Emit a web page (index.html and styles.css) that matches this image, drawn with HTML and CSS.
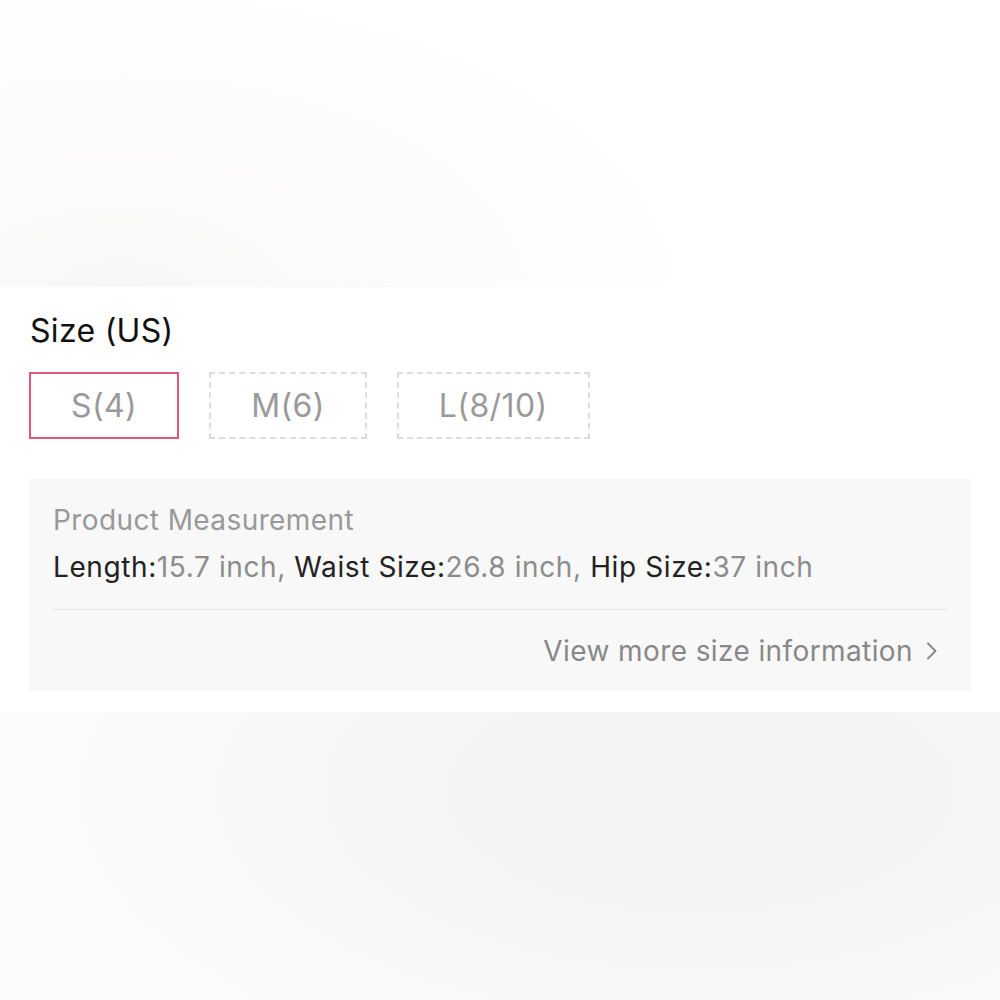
FILE: index.html
```html
<!DOCTYPE html>
<html>
<head>
<meta charset="utf-8">
<link rel="stylesheet" href="styles.css">
</head>
<body>
<div class="top-blur"></div>
<section class="panel">
  <h2 class="title">Size (US)</h2>
  <div class="sizes">
    <div class="size selected">S(4)</div>
    <div class="size">M(6)</div>
    <div class="size">L(8/10)</div>
  </div>
  <div class="measure">
    <div class="m-title">Product Measurement</div>
    <div class="m-values"><span class="k">Length:</span>15.7 inch, <span class="k">Waist Size:</span>26.8 inch, <span class="k">Hip Size:</span>37 inch</div>
    <div class="m-divider"></div>
    <div class="m-more">View more size information
      <svg class="chev" width="14" height="22" viewBox="0 0 14 22"><path d="M3 3.5 L10.5 11 L3 18.5" fill="none" stroke="#8a8a8a" stroke-width="2" stroke-linecap="round" stroke-linejoin="round"/></svg>
    </div>
  </div>
</section>
<div class="bottom-blur"></div>
</body>
</html>
```
FILE: styles.css
```css
* { box-sizing: border-box; }
html, body { margin: 0; padding: 0; }
body {
  width: 1000px;
  height: 1000px;
  overflow: hidden;
  font-family: Inter, Roboto, "Liberation Sans", sans-serif;
  background: #fff;
  display: flex;
  flex-direction: column;
}
.top-blur {
  height: 287px;
  flex: none;
  background:
    radial-gradient(ellipse 600px 330px at 120px 300px, rgba(249,245,245,0.9), rgba(251,249,249,0.6) 50%, rgba(255,255,255,0) 100%),
    #fff;
}
.panel {
  height: 425px;
  flex: none;
  background: #fff;
  padding: 26px 29px 0 29px;
}
.title {
  margin: 0;
  font-size: 32px;
  font-weight: 400;
  color: #111;
  line-height: 36px;
  letter-spacing: 0.3px;
  padding-left: 1px;
}
.sizes {
  display: flex;
  gap: 30px;
  margin-top: 23px;
}
.size {
  height: 67px;
  display: flex;
  align-items: center;
  justify-content: center;
  font-size: 32px;
  letter-spacing: 0.4px;
  color: #9a9a9a;
  border: 2px dashed #dcdcdc;
  padding: 0 40px;
}
.size.selected {
  border: 2px solid #df5680;
}
.measure {
  margin-top: 40px;
  background: #f8f8f8;
  height: 212px;
  padding: 24px 24px 0 24px;
}
.m-title {
  font-size: 28px;
  color: #999;
  line-height: 34px;
  letter-spacing: 0.4px;
}
.m-values {
  margin-top: 13px;
  font-size: 28px;
  color: #8c8c8c;
  line-height: 34px;
  letter-spacing: 0.6px;
}
.m-values .k { color: #222; }
.m-divider {
  margin-top: 25px;
  height: 1px;
  background: #e3e3e3;
}
.m-more {
  display: flex;
  justify-content: flex-end;
  align-items: center;
  gap: 12px;
  margin-top: 24px;
  font-size: 28px;
  color: #888;
  line-height: 34px;
  letter-spacing: 0.4px;
  padding-right: 8px;
}
.bottom-blur {
  flex: 1;
  background:
    radial-gradient(ellipse 700px 330px at 700px 80px, #f3f3f3 0%, #f5f5f5 40%, #f9f9f9 75%, #fbfbfb 100%);
}
```
